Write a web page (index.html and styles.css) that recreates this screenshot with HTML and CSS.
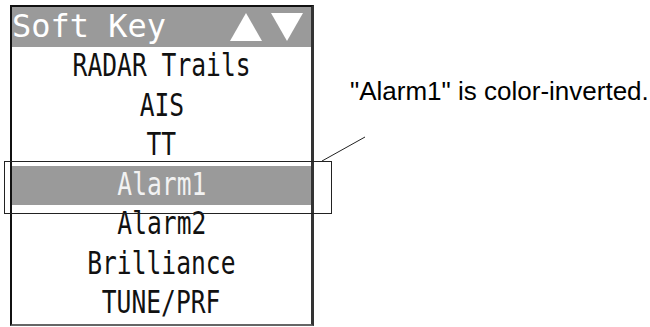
FILE: index.html
```html
<!DOCTYPE html>
<html lang="en">
  <head>
    <meta charset="UTF-8" />
    <title>Soft Key - Alarm1 inverted</title>
    <link rel="stylesheet" href="styles.css">
  </head>
  <body>
    <div class="figure">
      <div class="panel">
        <div class="panel-head">
          <span class="head-title">Soft Key</span>
          <span class="arrows">
            <svg width="32" height="28" viewBox="0 0 32 28"><polygon points="16,0 32,28 0,28" fill="#fff" /></svg>
            <svg width="32" height="28" viewBox="0 0 32 28"><polygon points="0,0 32,0 16,28" fill="#fff" /></svg>
          </span>
        </div>
        <div class="item"><span>RADAR Trails</span></div>
        <div class="item"><span>AIS</span></div>
        <div class="item"><span>TT</span></div>
        <div class="item inverted"><span>Alarm1</span></div>
        <div class="item"><span>Alarm2</span></div>
        <div class="item"><span>Brilliance</span></div>
        <div class="item"><span>TUNE/PRF</span></div>
      </div>

      <p class="note">"Alarm1" is color-inverted.</p>

      <!-- callout frame + leader line -->
      <div class="callout"></div>
      <svg class="leader" width="60" height="40" viewBox="0 0 60 40">
        <line x1="2" y1="37" x2="45" y2="13" stroke="#222" stroke-width="1" />
      </svg>
    </div>
  </body>
</html>
```

FILE: styles.css
```css
body {
  margin: 0;
  background-color: #fff;
}

.figure {
  position: relative;
  display: flex;
  align-items: flex-start;
  width: 650px;
  height: 327px;
  overflow: hidden;
}

.panel {
  margin: 5px 0 0 10px;
  width: 299px;
  border-top: 2px solid #111;
  border-left: 2px solid #111;
  border-right: 3px solid #333;
  border-bottom: 2px solid #666;
  font-family: "DejaVu Sans Mono", monospace;
}

.panel-head {
  display: flex;
  align-items: center;
  justify-content: space-between;
  height: 40px;
  background-color: #9a9a9a;
  color: #fff;
}

.head-title {
  font-size: 32px;
  line-height: 38px;
  margin-top: -2px;
}

.arrows {
  display: flex;
  gap: 9px;
  margin-right: 8px;
  margin-top: -1px;
}

.arrows svg {
  display: block;
}

.item {
  height: 39.5px;
  display: flex;
  align-items: center;
  justify-content: center;
  color: #111;
}

.item span {
  display: inline-block;
  font-size: 32px;
  line-height: 36px;
  margin-top: -3px;
  transform: scaleX(0.77);
}

.item.inverted {
  background-color: #9a9a9a;
  color: #f2f2f2;
}

.note {
  margin: 76px 0 0 36px;
  font-family: "Liberation Sans", Arial, sans-serif;
  font-size: 26px;
  color: #000;
  white-space: nowrap;
}

.callout {
  position: absolute;
  left: 4px;
  top: 161px;
  width: 326px;
  height: 51px;
  border: 1px solid #222;
}

.leader {
  position: absolute;
  left: 320px;
  top: 124px;
}
```
